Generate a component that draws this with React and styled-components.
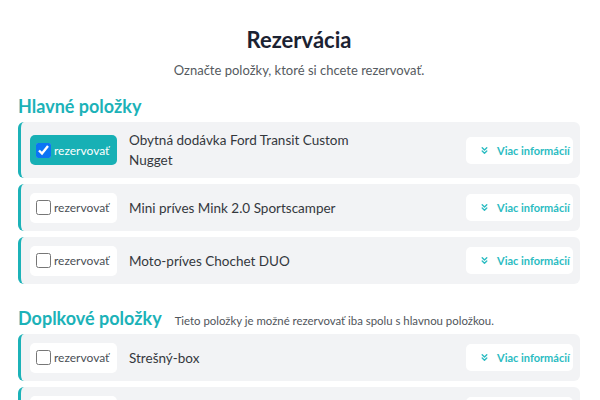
import React, { useState } from "react";
import styled, { createGlobalStyle } from "styled-components";
import { ChevronsDown } from "lucide-react";

const GlobalStyle = createGlobalStyle`
  html, body {
    margin: 0;
    padding: 0;
    background: #ffffff;
    font-family: "Lato", "Noto Sans", sans-serif;
  }
`;

const mainItems = [
  { id: 1, name: "Obytná dodávka Ford Transit Custom Nugget", checked: true },
  { id: 2, name: "Mini príves Mink 2.0 Sportscamper", checked: false },
  { id: 3, name: "Moto-príves Chochet DUO", checked: false },
];

const extraItems = [
  { id: 4, name: "Strešný-box", checked: false },
  { id: 5, name: "Nosič bicyklov", checked: false },
];

function ItemRow({ item }) {
  const [checked, setChecked] = useState(item.checked);
  return (
    <Card>
      <ReserveButton $active={checked}>
        <CheckBox
          type="checkbox"
          checked={checked}
          onChange={() => setChecked(!checked)}
        />
        rezervovať
      </ReserveButton>
      <ItemName>{item.name}</ItemName>
      <InfoButton>
        <ChevronsDown size={11} strokeWidth={3} />
        Viac informácií
      </InfoButton>
    </Card>
  );
}

function App() {
  return (
    <>
      <GlobalStyle />
      <Page>
        <Title>Rezervácia</Title>
        <Subtitle>Označte položky, ktoré si chcete rezervovať.</Subtitle>

        <SectionHeader>
          <SectionTitle>Hlavné položky</SectionTitle>
        </SectionHeader>
        <List>
          {mainItems.map((item) => (
            <ItemRow key={item.id} item={item} />
          ))}
        </List>

        <SectionHeader $spaced>
          <SectionTitle>Doplkové položky</SectionTitle>
          <SectionNote>
            Tieto položky je možné rezervovať iba spolu s hlavnou položkou.
          </SectionNote>
        </SectionHeader>
        <List>
          {extraItems.map((item) => (
            <ItemRow key={item.id} item={item} />
          ))}
        </List>
      </Page>
    </>
  );
}

export default App;

const Page = styled.div`
  padding: 26px 20px 20px 18px;
  height: 400px;
  box-sizing: border-box;
  overflow: hidden;
`;

const Title = styled.h1`
  margin: 0;
  text-align: center;
  font-size: 22px;
  font-weight: 700;
  color: #1b2232;
  line-height: 28px;
`;

const Subtitle = styled.p`
  margin: 7px 0 0;
  text-align: center;
  font-size: 13px;
  color: #555a60;
  line-height: 18px;
`;

const SectionHeader = styled.div`
  display: flex;
  align-items: baseline;
  gap: 13px;
  margin-top: ${(p) => (p.$spaced ? "22px" : "15px")};
  margin-bottom: 4px;
`;

const SectionTitle = styled.h2`
  margin: 0;
  font-size: 18px;
  font-weight: 700;
  color: #1cb2b8;
  line-height: 24px;
`;

const SectionNote = styled.span`
  font-size: 11.4px;
  color: #50555b;
`;

const List = styled.div`
  display: flex;
  flex-direction: column;
  gap: 6px;
`;

const Card = styled.div`
  display: flex;
  align-items: center;
  min-height: 47px;
  box-sizing: border-box;
  padding: 8px 7px 8px 9px;
  background: #f2f3f5;
  border-left: 3px solid #1cb2b8;
  border-radius: 6px;
`;

const ReserveButton = styled.label`
  display: flex;
  align-items: center;
  gap: 3px;
  flex-shrink: 0;
  width: 87px;
  height: 30px;
  box-sizing: border-box;
  padding: 0 6px;
  border-radius: 5px;
  font-size: 12px;
  cursor: pointer;
  background: ${(p) => (p.$active ? "#17b0b5" : "#ffffff")};
  color: ${(p) => (p.$active ? "#ffffff" : "#4a4f55")};
`;

const CheckBox = styled.input`
  margin: 0;
  width: 15px;
  height: 15px;
  accent-color: #0a74f5;
`;

const ItemName = styled.div`
  flex: 1;
  max-width: 240px;
  margin-left: 12px;
  font-size: 13.5px;
  line-height: 20px;
  color: #34383d;
`;

const InfoButton = styled.button`
  margin-left: auto;
  display: flex;
  align-items: center;
  gap: 7px;
  width: 107px;
  height: 27px;
  padding: 0 0 0 13px;
  border: none;
  border-radius: 5px;
  background: #ffffff;
  color: #2bbcc2;
  font-family: inherit;
  font-size: 11px;
  font-weight: 700;
  cursor: pointer;
`;
